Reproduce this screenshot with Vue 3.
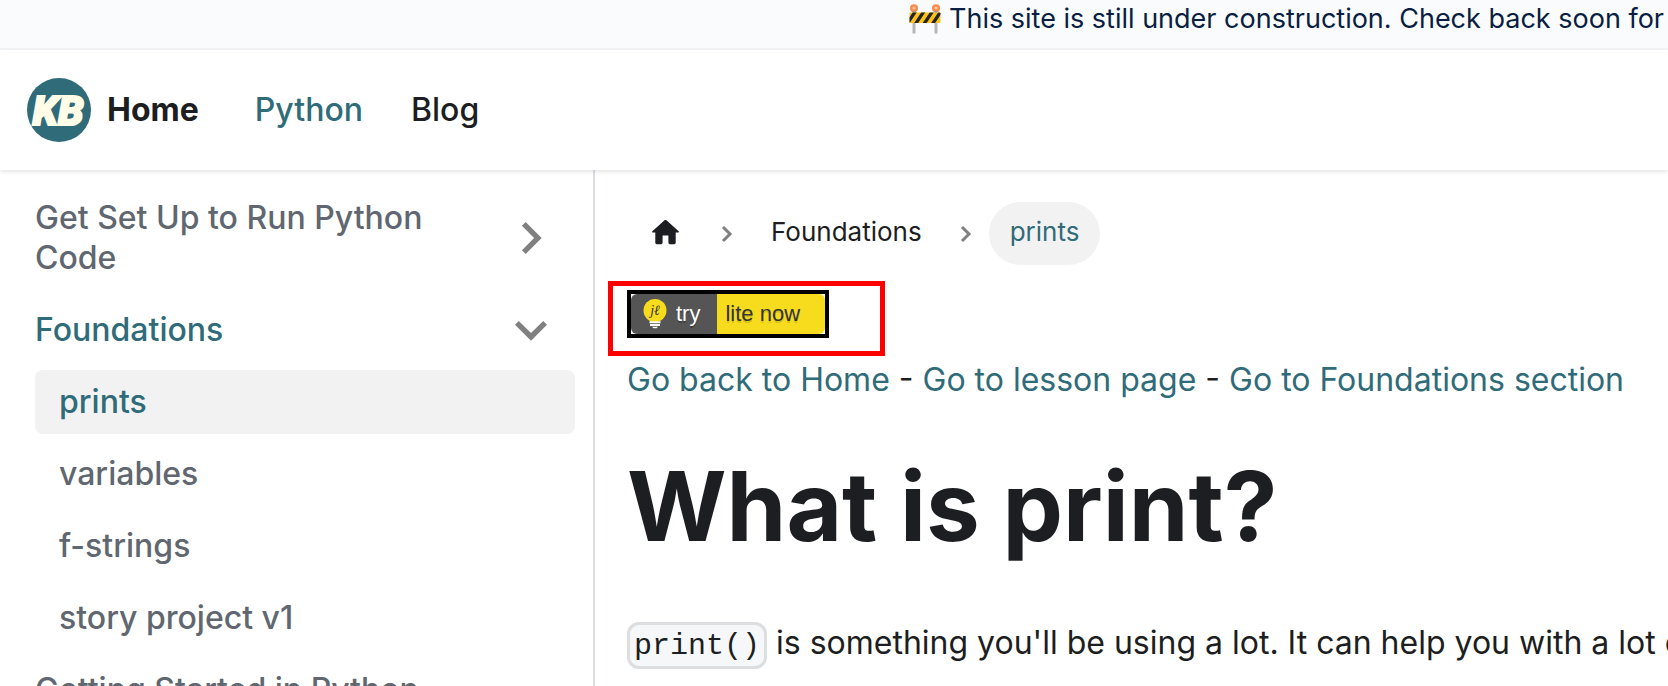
<script setup>
const lessons = [
  { name: 'prints', active: true },
  { name: 'variables', active: false },
  { name: 'f-strings', active: false },
  { name: 'story project v1', active: false },
]
const caret = 'M7.41 15.41L12 10.83l4.59 4.58L18 14l-6-6-6 6z'
</script>

<template>
  <div class="page">
    <div class="announcement" role="banner">
      <svg class="barrier" viewBox="0 0 32 30" aria-hidden="true">
        <defs>
          <clipPath id="board"><rect x="0.5" y="8.5" width="31" height="10.5" rx="1" /></clipPath>
        </defs>
        <path d="M3.5 18h3v11.5h-3zM25.5 18h3v11.5h-3z" fill="#b4b8b8" />
        <circle cx="5" cy="4.2" r="4" fill="#f58b4c" />
        <circle cx="27" cy="4.2" r="4" fill="#f58b4c" />
        <circle cx="5" cy="4" r="1.6" fill="#ffc69c" />
        <circle cx="27" cy="4" r="1.6" fill="#ffc69c" />
        <path d="M3.5 7h3v2h-3zM25.5 7h3v2h-3z" fill="#9a9a9a" />
        <g clip-path="url(#board)">
          <rect y="8" width="32" height="12" fill="#fcc21b" />
          <path d="M-4 20l8-12h4l-8 12zM4.500 20l8-12h4l-8 12zM13 20l8-12h4l-8 12zM21.500 20l8-12h4l-8 12z" fill="#252525" />
        </g>
      </svg>
      <span>This site is still under construction. Check back soon for more</span>
    </div>

    <nav class="navbar" aria-label="Main">
      <a class="brand" href="#">
        <svg class="logo" viewBox="0 0 64 64" aria-hidden="true">
          <circle cx="32" cy="32" r="32" fill="#306b7a" />
          <text class="logo-text" x="31" y="47" text-anchor="middle">KB</text>
        </svg>
        <span>Home</span>
      </a>
      <a class="nav-link active" href="#">Python</a>
      <a class="nav-link" href="#">Blog</a>
    </nav>

    <div class="body">
      <aside class="sidebar">
        <ul class="menu">
          <li>
            <a class="menu-link" href="#">
              <span>Get Set Up to Run Python Code</span>
              <span class="caret">
                <svg class="closed" viewBox="0 0 24 24" aria-hidden="true"><path :d="caret" /></svg>
              </span>
            </a>
          </li>
          <li>
            <a class="menu-link active" href="#">
              <span>Foundations</span>
              <span class="caret">
                <svg class="open" viewBox="0 0 24 24" aria-hidden="true"><path :d="caret" /></svg>
              </span>
            </a>
            <ul class="menu submenu">
              <li v-for="lesson in lessons" :key="lesson.name">
                <a class="menu-link" :class="{ active: lesson.active, current: lesson.active }" href="#">{{ lesson.name }}</a>
              </li>
            </ul>
          </li>
          <li>
            <a class="menu-link" href="#"><span>Getting Started in Python</span></a>
          </li>
        </ul>
      </aside>

      <main class="content">
        <nav class="breadcrumbs" aria-label="Breadcrumbs">
          <a class="crumb" href="#" aria-label="Home page">
            <svg class="home" viewBox="0 0 24 24" aria-hidden="true">
              <path d="M10 19v-5h4v5c0 .55.45 1 1 1h3c.55 0 1-.45 1-1v-7h1.7c.46 0 .68-.57.33-.87L12.670 3.600c-.38-.34-.96-.34-1.340 0l-8.360 7.530c-.34.3-.13.87.33.87H5v7c0 .55.45 1 1 1h3c.55 0 1-.45 1-1z" />
            </svg>
          </a>
          <svg class="separator" viewBox="0 0 12 18" aria-hidden="true"><path d="M2 2l7 7-7 7" /></svg>
          <a class="crumb" href="#">Foundations</a>
          <svg class="separator" viewBox="0 0 12 18" aria-hidden="true"><path d="M2 2l7 7-7 7" /></svg>
          <a class="crumb current" href="#">prints</a>
        </nav>

        <div class="badge-row">
          <a class="badge" href="#">
            <span class="badge-left">
              <svg class="bulb" viewBox="0 0 24 30" aria-hidden="true">
                <circle cx="12" cy="11.500" r="11.500" fill="#f7dc1e" />
                <path d="M6.500 22.200h11v2h-11zM7 25h10v2H7zM9 27.700h6l-1.500 1.500h-3z" fill="#fff" />
                <text class="bulb-text" x="12" y="16" text-anchor="middle">jℓ</text>
              </svg>
              <span>try</span>
            </span>
            <span class="badge-right">lite now</span>
          </a>
          <div class="highlight"></div>
        </div>

        <p class="links">
          <a href="#">Go back to Home</a> - <a href="#">Go to lesson page</a> - <a href="#">Go to Foundations section</a>
        </p>
        <h1>What is print?</h1>
        <p class="intro"><code>print()</code> is something you'll be using a lot. It can help you with a lot of things</p>
      </main>
    </div>
  </div>
</template>

<style>
body {
  margin: 0;
  background: #fff;
}
</style>

<style scoped>
.page {
  display: flex;
  flex-direction: column;
  height: 100vh;
  overflow: hidden;
  color: #1c1e21;
  font: 400 32px/53px Inter, "Liberation Sans", sans-serif;
}
a {
  color: #306b7a;
  text-decoration: none;
}
.announcement {
  display: flex;
  flex: none;
  align-items: center;
  gap: 8px;
  height: 38px;
  padding: 0 0 10px 909px;
  border-bottom: 2px solid #f2f3f4;
  overflow: hidden;
  background: #fafbfc;
  color: #091e42;
  font-size: 27px;
  line-height: 40px;
  white-space: nowrap;
}
.barrier {
  flex: none;
  width: 32px;
  height: 30px;
}
.navbar {
  position: relative;
  z-index: 1;
  display: flex;
  flex: none;
  align-items: center;
  height: 120px;
  padding: 0 27px;
  background: #fff;
  box-shadow: 0 2px 4px rgba(0, 0, 0, 0.1);
  line-height: 52px;
}
.brand {
  display: flex;
  align-items: center;
  gap: 16px;
  margin-right: 32px;
  color: #1c1e21;
  font-weight: 700;
}
.logo {
  width: 64px;
  height: 64px;
}
.logo-text {
  fill: #fffde7;
  stroke: #fffde7;
  stroke-width: 2;
  font: italic 900 41px Roboto, "Liberation Sans", sans-serif;
}
.nav-link {
  padding: 0 24px;
  color: #1c1e21;
  font-weight: 500;
}
.nav-link.active {
  color: #306b7a;
}
.body {
  display: flex;
  flex: 1;
  min-height: 0;
}
.sidebar {
  box-sizing: border-box;
  flex: none;
  width: 595px;
  padding: 16px 18px 0 11px;
  border-right: 2px solid #dadde1;
}
.menu {
  display: flex;
  flex-direction: column;
  gap: 8px;
  margin: 0;
  padding: 0;
  list-style: none;
}
.submenu {
  margin-top: 8px;
  padding-left: 24px;
}
.menu-link {
  display: flex;
  align-items: center;
  justify-content: space-between;
  padding: 12px 24px;
  border-radius: 8px;
  color: #606770;
  font-weight: 500;
  line-height: 40px;
}
.menu-link.active {
  color: #306b7a;
}
.menu-link.current {
  background: #f2f2f2;
}
.caret {
  display: flex;
  flex: none;
  align-items: center;
  justify-content: center;
  width: 40px;
  height: 40px;
  margin-left: 24px;
}
.caret svg {
  flex: none;
  width: 64px;
  height: 64px;
  fill: #808080;
}
.caret .closed {
  transform: rotate(90deg);
}
.caret .open {
  transform: rotate(180deg);
}
.content {
  flex: 1;
  min-width: 0;
  padding: 32px 0 0 32px;
  overflow: hidden;
}
.breadcrumbs {
  display: flex;
  align-items: center;
  font-size: 26px;
  line-height: 40px;
}
.crumb {
  display: flex;
  align-items: center;
  height: 40px;
  padding: 10px 21px 13px;
  border-radius: 32px;
  color: #1c1e21;
}
.crumb.current {
  background: #f2f2f2;
  color: #306b7a;
}
.home {
  width: 35px;
  height: 35px;
  fill: #1c1e21;
}
.separator {
  width: 12px;
  height: 18px;
  margin: 0 17px;
  fill: none;
  stroke: #808080;
  stroke-width: 3;
}
.badge-row {
  position: relative;
  display: flex;
  margin: 25px 0 15px;
}
.badge {
  display: flex;
  border: 4px solid #000;
  color: #fff;
  font: 22px/40px "Liberation Sans", Arial, sans-serif;
}
.badge-left {
  display: flex;
  align-items: center;
  gap: 9px;
  padding: 0 17px 0 12px;
  border-radius: 6px 0 0 6px;
  background: #555;
  text-shadow: 0 2px 0 rgba(1, 1, 1, 0.3);
}
.badge-right {
  padding: 0 25px 0 8px;
  border-radius: 0 6px 6px 0;
  background: #f7dc1e;
  color: #333;
  text-shadow: 0 2px 0 rgba(1, 1, 1, 0.15);
}
.bulb {
  width: 24px;
  height: 30px;
}
.bulb-text {
  fill: #333;
  font: italic 14px "Liberation Serif", "DejaVu Serif", serif;
  text-shadow: none;
}
.highlight {
  position: absolute;
  top: -9px;
  left: -19px;
  box-sizing: border-box;
  width: 277px;
  height: 75px;
  border: 5px solid #f00;
  pointer-events: none;
}
p {
  margin: 0;
  white-space: nowrap;
}
h1 {
  margin: 40px 0 50px;
  font-size: 96px;
  font-weight: 700;
  line-height: 120px;
}
code {
  padding: 4px 4px 3px;
  border: 3px solid #dcdee0;
  border-radius: 12px;
  background: #f6f7f8;
  font: 30px/34px "Liberation Mono", monospace;
}
</style>
